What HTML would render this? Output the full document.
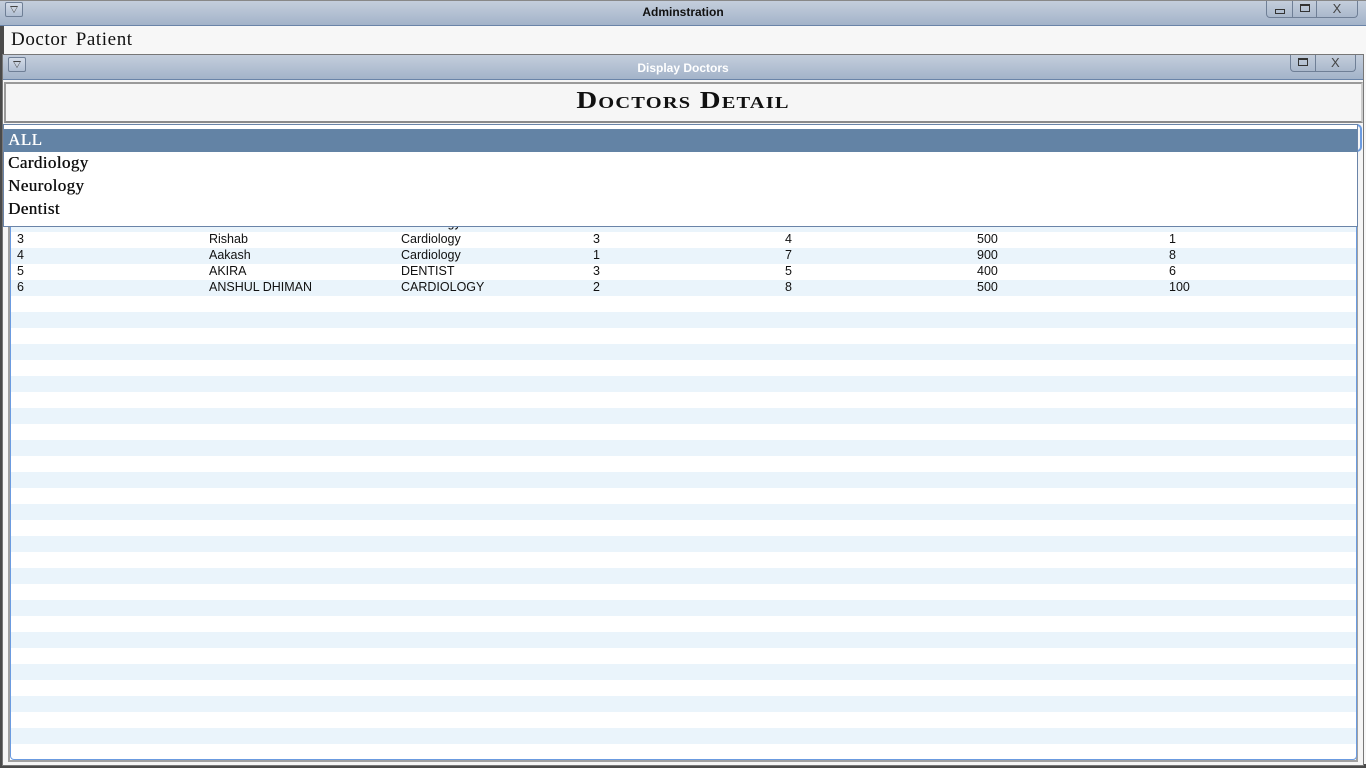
<!DOCTYPE html>
<html><head><meta charset="utf-8"><style>
*{margin:0;padding:0;box-sizing:border-box}
body{width:1366px;height:768px;overflow:hidden;background:#4a4a4a;position:relative;font-family:"Liberation Sans",sans-serif}
.abs{position:absolute}
.tb{background:linear-gradient(#c4cedc,#a3b3c9);border-bottom:1px solid #6a84a8}
.sysbtn{position:absolute;width:18px;height:15px;border:1px solid #6f7f96;border-radius:2px;background:linear-gradient(#d4dce8,#b0bed2)}
.sysbtn:after{content:"";position:absolute;left:4px;top:3px;border-left:4px solid transparent;border-right:4px solid transparent;border-top:7px solid #444}
.sysbtn:before{content:"";position:absolute;left:5px;top:4px;border-left:3px solid transparent;border-right:3px solid transparent;border-top:5px solid #c9d2df;z-index:2}
.btngrp{position:absolute;height:17px;border:1px solid #6f7f96;border-top:none;border-radius:0 0 4px 4px;background:linear-gradient(#c4cedc,#aab8cc);display:flex}
.btngrp div{border-right:1px solid #6f7f96;height:100%;position:relative;font-size:13px;color:#444;text-align:center;line-height:15px}
.btngrp div:last-child{border-right:none}
.row{position:absolute;left:12px;width:1343px;height:16px;font-size:12.5px;color:#111;line-height:16px}
.row span{position:absolute;top:0}
.dd div{padding-left:4px;height:23px;line-height:22px;letter-spacing:0.4px;text-shadow:0.4px 0 0 currentColor}
</style></head><body>
<div class="abs" style="left:4px;top:0;width:1362px;height:764px;background:#f7f7f7"></div>
<div class="abs tb" style="left:0;top:0;width:1366px;height:26px;border-top:1px solid #888"></div>
<div class="sysbtn" style="left:5px;top:2px"></div>
<div class="abs" style="left:0;top:5px;width:1366px;text-align:center;font-weight:bold;font-size:12px;color:#111">Adminstration</div>
<div class="btngrp" style="left:1266px;top:1px;width:92px">
 <div style="width:26px"><span style="position:absolute;left:8px;top:8px;width:10px;height:5px;border:1px solid #333"></span></div>
 <div style="width:24px"><span style="position:absolute;left:7px;top:3px;width:10px;height:8px;border:1px solid #333;border-top-width:2px"></span></div>
 <div style="width:40px">X</div>
</div>
<div class="abs" style="left:11px;top:29px;font-family:'Liberation Serif',serif;font-size:19px;letter-spacing:0.6px;word-spacing:3px;color:#111">Doctor Patient</div>
<div class="abs" style="left:2px;top:54px;width:1362px;height:712px;border:1px solid #777;background:#f5f5f5"></div>
<div class="abs tb" style="left:3px;top:55px;width:1360px;height:25px"></div>
<div class="sysbtn" style="left:8px;top:57px"></div>
<div class="abs" style="left:0;top:61px;width:1366px;text-align:center;font-weight:bold;font-size:12px;color:#fff">Display Doctors</div>
<div class="btngrp" style="left:1290px;top:55px;width:66px">
 <div style="width:25px"><span style="position:absolute;left:7px;top:3px;width:10px;height:8px;border:1px solid #333;border-top-width:2px"></span></div>
 <div style="width:40px">X</div>
</div>
<div class="abs" style="left:4px;top:82px;width:1359px;height:41px;border:2px solid #9a9a9a;border-right-color:#ccc;border-bottom-color:#8a8a8a;background:#f6f6f6"></div>
<div class="abs" style="left:0;top:88px;width:1366px;text-align:center;font-family:'Liberation Serif',serif;font-weight:bold;font-size:24px;font-variant:small-caps;letter-spacing:1px;color:#111;transform:scaleX(1.2)">Doctors Detail</div>
<div class="abs" style="left:8px;top:170px;width:1350px;height:592px;border:2px solid #a0a0a0;background:#fff"></div>
<div class="abs" style="left:10px;top:172px;width:1347px;height:588px;border:1px solid #6b9be0;border-radius:0 0 4px 4px;background:repeating-linear-gradient(#eaf4fb 0 16px,#fff 16px 32px);background-position:0 43px"></div>
<div class="row" style="top:215px"><span style="left:5px">2</span><span style="left:197px">Sunil</span><span style="left:389px">Cardiology</span><span style="left:581px">2</span><span style="left:773px">3</span><span style="left:965px">500</span><span style="left:1157px">3</span></div>
<div class="row" style="top:231px"><span style="left:5px">3</span><span style="left:197px">Rishab</span><span style="left:389px">Cardiology</span><span style="left:581px">3</span><span style="left:773px">4</span><span style="left:965px">500</span><span style="left:1157px">1</span></div>
<div class="row" style="top:247px"><span style="left:5px">4</span><span style="left:197px">Aakash</span><span style="left:389px">Cardiology</span><span style="left:581px">1</span><span style="left:773px">7</span><span style="left:965px">900</span><span style="left:1157px">8</span></div>
<div class="row" style="top:263px"><span style="left:5px">5</span><span style="left:197px">AKIRA</span><span style="left:389px">DENTIST</span><span style="left:581px">3</span><span style="left:773px">5</span><span style="left:965px">400</span><span style="left:1157px">6</span></div>
<div class="row" style="top:279px"><span style="left:5px">6</span><span style="left:197px">ANSHUL DHIMAN</span><span style="left:389px">CARDIOLOGY</span><span style="left:581px">2</span><span style="left:773px">8</span><span style="left:965px">500</span><span style="left:1157px">100</span></div>
<div class="abs" style="left:1350px;top:124px;width:12px;height:28px;border:2px solid #6b9be0;border-left:none;border-radius:0 5px 5px 0"></div>
<div class="abs dd" style="left:3px;top:124px;width:1355px;height:103px;border:1px solid #6a84a8;background:#fff;font-family:'Liberation Serif',serif;font-size:17px;color:#111">
 <div style="margin-top:4px;background:#6383a5;color:#fff">ALL</div>
 <div>Cardiology</div>
 <div>Neurology</div>
 <div>Dentist</div>
</div>
</body></html>
